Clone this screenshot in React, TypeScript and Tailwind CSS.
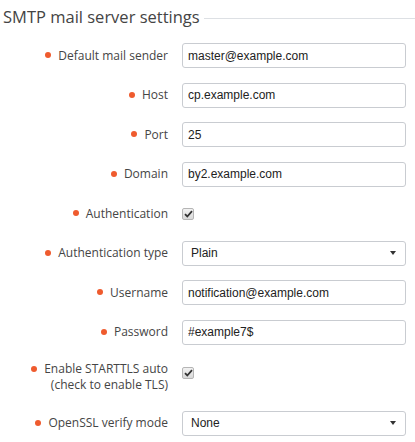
import React from "react";

const Dot = () => (
  <span className="mb-[2px] mr-[7px] inline-block h-[6px] w-[6px] rounded-full bg-[#ef5b2e] align-middle" />
);

const Label = ({ children }: { children: React.ReactNode }) => (
  <div className="w-[168px] shrink-0 text-right leading-[16px]">
    <Dot />
    {children}
  </div>
);

const TextInput = ({ value }: { value: string }) => (
  <input
    readOnly
    value={value}
    className="h-[25px] w-[224px] rounded-[3px] border border-[#c9ccd1] bg-white px-[5px] text-[12px] text-[#222] outline-none [font-family:'Liberation_Sans',Arial,sans-serif]"
  />
);

const Select = ({ value }: { value: string }) => (
  <div className="flex h-[25px] w-[224px] items-center justify-between rounded-[3px] border border-[#c9ccd1] bg-white pl-[8px] pr-[9px] text-[12px] text-[#222] [font-family:'Liberation_Sans',Arial,sans-serif]">
    <span>{value}</span>
    <svg width="6" height="4" viewBox="0 0 6 4">
      <path d="M0 0H6L3 4Z" fill="#333" />
    </svg>
  </div>
);

const Check = () => (
  <div className="flex h-[12px] w-[12px] items-center justify-center rounded-[2px] border border-[#b5b5b5] bg-gradient-to-b from-[#f2f2f2] to-[#d9d9d9]">
    <svg width="9" height="8" viewBox="0 0 9 8">
      <path d="M1 4.2L3.3 6.5L8 1.2" stroke="#333" strokeWidth="1.8" fill="none" />
    </svg>
  </div>
);

const Row = ({ label, children }: { label: React.ReactNode; children: React.ReactNode }) => (
  <div className="flex h-[25px] items-center gap-[14px]">
    <Label>{label}</Label>
    {children}
  </div>
);

export default function App() {
  return (
    <div className="h-[442px] w-[415px] overflow-hidden bg-white text-[12px] text-[#454545] [font-family:'Open_Sans',sans-serif]">
      <div className="flex items-center pl-[3px] pt-[4px]">
        <h2 className="text-[16.5px] leading-[26px] text-[#444]">SMTP mail server settings</h2>
        <div className="ml-[4px] mt-[3px] h-px flex-1 bg-[#dde0e4]" />
      </div>
      <div className="mt-[13px] flex flex-col gap-[14.5px]">
        <Row label="Default mail sender">
          <TextInput value="master@example.com" />
        </Row>
        <Row label="Host">
          <TextInput value="cp.example.com" />
        </Row>
        <Row label="Port">
          <TextInput value="25" />
        </Row>
        <Row label="Domain">
          <TextInput value="by2.example.com" />
        </Row>
        <Row label="Authentication">
          <Check />
        </Row>
        <Row label="Authentication type">
          <Select value="Plain" />
        </Row>
        <Row label="Username">
          <TextInput value="notification@example.com" />
        </Row>
        <Row label="Password">
          <TextInput value="#example7$" />
        </Row>
        <div className="flex items-start gap-[14px] pt-[2px]">
          <Label>
            Enable STARTTLS auto
            <br />
            (check to enable TLS)
          </Label>
          <div className="pt-[6px]">
            <Check />
          </div>
        </div>
        <div className="mt-[3px]">
          <Row label="OpenSSL verify mode">
            <Select value="None" />
          </Row>
        </div>
      </div>
    </div>
  );
}
